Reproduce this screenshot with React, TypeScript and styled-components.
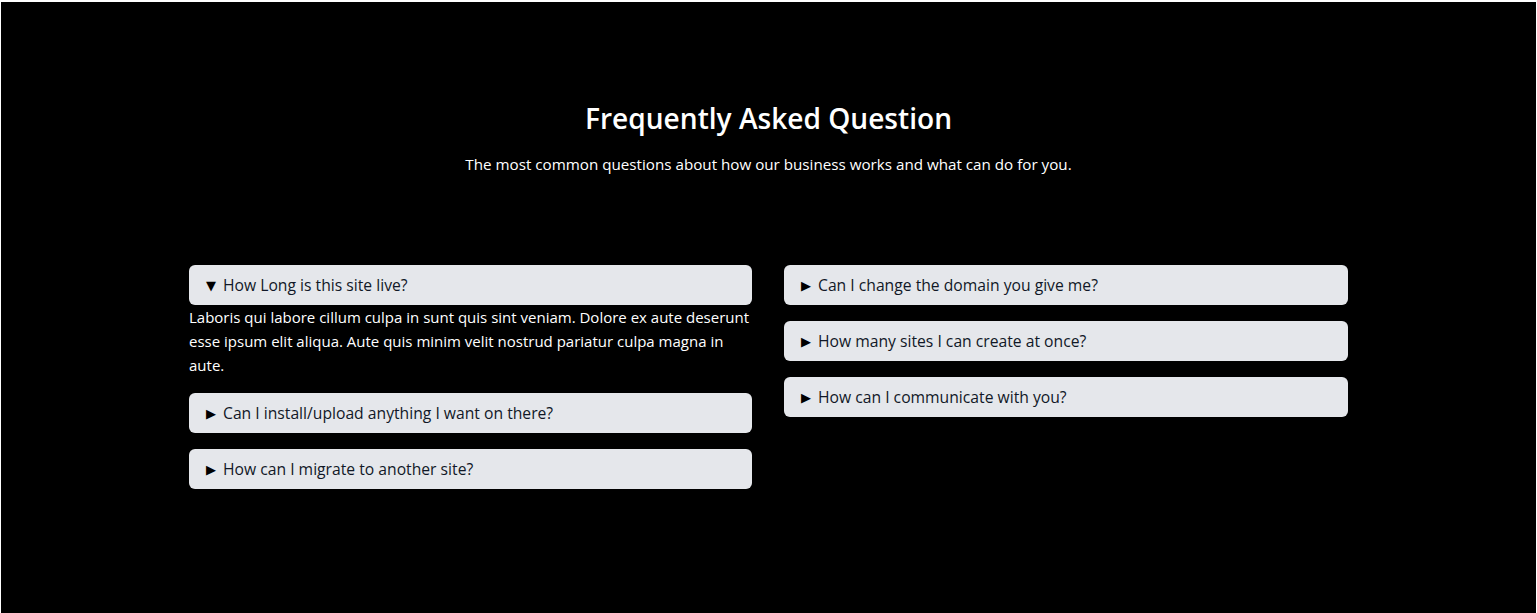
import React from "react";
import styled, { createGlobalStyle } from "styled-components";

const GlobalStyle = createGlobalStyle`
  html, body { margin: 0; padding: 0; background: #ffffff; }
  body { font-family: "Open Sans", "Noto Sans", sans-serif; }
  * { box-sizing: border-box; }
`;

const Section = styled.section`
  margin: 2px 1px 0 1px;
  min-height: 611px;
  background: #000000;
  color: #ffffff;
  padding-top: 100px;
`;

const Header = styled.header`
  display: flex;
  flex-direction: column;
  align-items: center;
`;

const Title = styled.h2`
  margin: 0;
  font-size: 28.1px;
  font-weight: 600;
  line-height: 32px;
`;

const Subtitle = styled.p`
  margin: 18px 0 0;
  font-size: 15.2px;
  line-height: 24px;
`;

const Grid = styled.div`
  width: 1159px;
  margin: 89px auto 0;
  display: grid;
  grid-template-columns: 563px 564px;
  column-gap: 32px;
  align-items: start;
`;

const Column = styled.div`
  display: flex;
  flex-direction: column;
  gap: 16px;
`;

const Item = styled.details`
  font-size: 15.7px;
`;

const Summary = styled.summary`
  height: 40px;
  display: flex;
  align-items: center;
  gap: 6px;
  padding: 0 16px 0 16px;
  border-radius: 6px;
  background: #e5e7eb;
  color: #111827;
  cursor: pointer;
  list-style: none;
  &::-webkit-details-marker { display: none; }
`;

const Marker = styled.span`
  font-family: "DejaVu Sans", sans-serif;
  font-size: 13px;
  width: 12px;
  display: inline-flex;
  justify-content: center;
  color: #000000;
`;

const Answer = styled.p`
  margin: 0;
  font-size: 15px;
  line-height: 24px;
  color: #ffffff;
`;

type Faq = { q: string; a?: string; open?: boolean };

const left: Faq[] = [
  {
    q: "How Long is this site live?",
    a: "Laboris qui labore cillum culpa in sunt quis sint veniam. Dolore ex aute deserunt esse ipsum elit aliqua. Aute quis minim velit nostrud pariatur culpa magna in aute.",
    open: true,
  },
  { q: "Can I install/upload anything I want on there?" },
  { q: "How can I migrate to another site?" },
];

const right: Faq[] = [
  { q: "Can I change the domain you give me?" },
  { q: "How many sites I can create at once?" },
  { q: "How can I communicate with you?" },
];

const FaqItem = ({ q, a, open }: Faq) => (
  <Item open={open}>
    <Summary>
      <Marker>{open ? "▼" : "▶"}</Marker>
      {q}
    </Summary>
    {a && <Answer>{a}</Answer>}
  </Item>
);

export default function App() {
  return (
    <>
      <GlobalStyle />
      <Section>
        <Header>
          <Title>Frequently Asked Question</Title>
          <Subtitle>
            The most common questions about how our business works and what can do for you.
          </Subtitle>
        </Header>
        <Grid>
          <Column>
            {left.map((f) => (
              <FaqItem key={f.q} {...f} />
            ))}
          </Column>
          <Column>
            {right.map((f) => (
              <FaqItem key={f.q} {...f} />
            ))}
          </Column>
        </Grid>
      </Section>
    </>
  );
}
